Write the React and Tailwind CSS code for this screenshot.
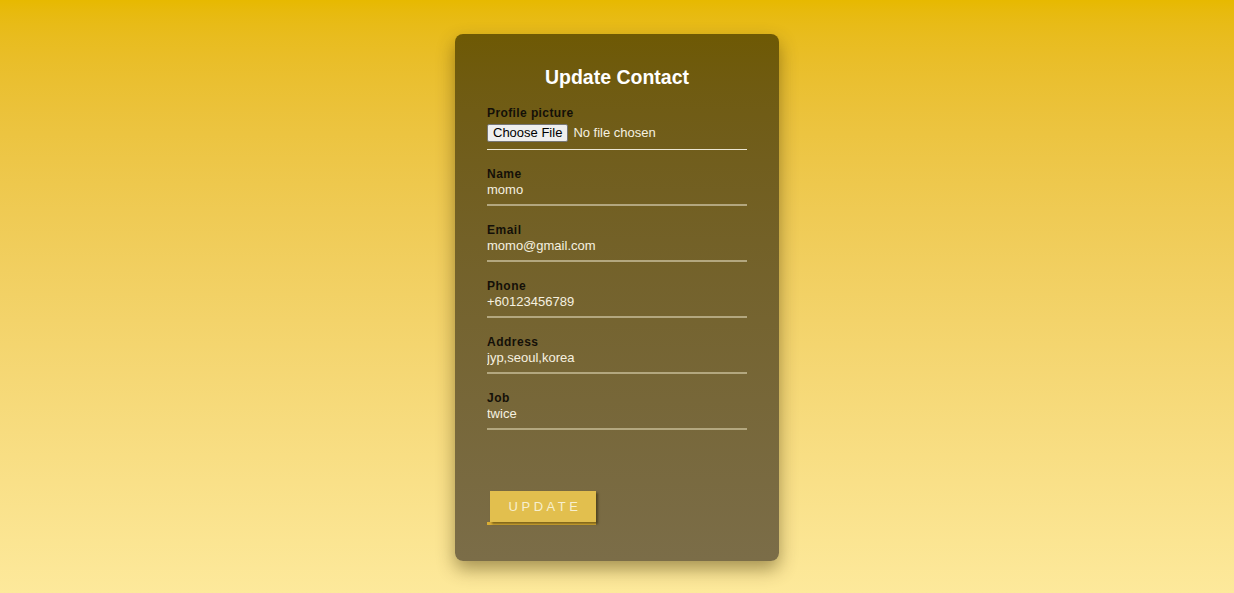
import { useState } from 'react';

const fields = [
  { label: 'Name', value: 'momo' },
  { label: 'Email', value: 'momo@gmail.com' },
  { label: 'Phone', value: '+60123456789' },
  { label: 'Address', value: 'jyp,seoul,korea' },
  { label: 'Job', value: 'twice' },
];

export default function App() {
  const [form, setForm] = useState(fields.map(f => f.value));

  return (
    <div className="min-h-[593px] w-full bg-gradient-to-b from-[#e7b900] to-[#fde99b] flex justify-center pt-[34px] font-['Liberation_Sans',Arial,sans-serif]">
      <div className="w-[324px] h-[527px] rounded-lg bg-gradient-to-b from-[#6e5904] to-[#7b6d48] shadow-[0_8px_18px_rgba(60,45,0,0.45)] px-8 pt-[31px]">
        <h1 className="text-[19.5px] leading-[24px] font-bold text-white text-center mb-[17px]">Update Contact</h1>

        {/* Profile picture */}
        <div className="border-b border-[#ece6d2] pb-[5px] mb-[17px]">
          <label className="block text-[12px] leading-[14px] font-bold tracking-[0.4px] text-[#141008]">Profile picture</label>
          <input
            type="file"
            className="mt-[2px] text-[13px] leading-[16px] text-[#f6f1e0] file:bg-[#efefef] file:text-black file:border file:border-[#767676] file:rounded-[2px] file:px-[5px] file:py-0 file:mr-[5px] file:h-[18px] file:leading-[16px] file:text-[13px]"
          />
        </div>

        {fields.map((f, i) => (
          <div key={f.label} className="mb-[17px]">
            <label className="block text-[12px] leading-[14px] font-bold tracking-[0.5px] text-[#141008]">{f.label}</label>
            <input
              type="text"
              value={form[i]}
              onChange={e => {
                const next = [...form];
                next[i] = e.target.value;
                setForm(next);
              }}
              className="block w-full h-[25px] pb-[6px] bg-transparent outline-none border-b-2 border-[#b3a77f] text-[13px] text-[#f6f1e0]"
            />
          </div>
        ))}

        <div className="mt-[44px] inline-block border-b-[3px] border-[#d9ad33]">
          <button className="ml-[3px] w-[106px] h-[31px] bg-[#e2bf4e] text-[#f7efcf] text-[13px] tracking-[3.5px] pl-[4px] shadow-[2px_2px_2px_rgba(40,30,0,0.5)]">
            UPDATE
          </button>
        </div>
      </div>
    </div>
  );
}
